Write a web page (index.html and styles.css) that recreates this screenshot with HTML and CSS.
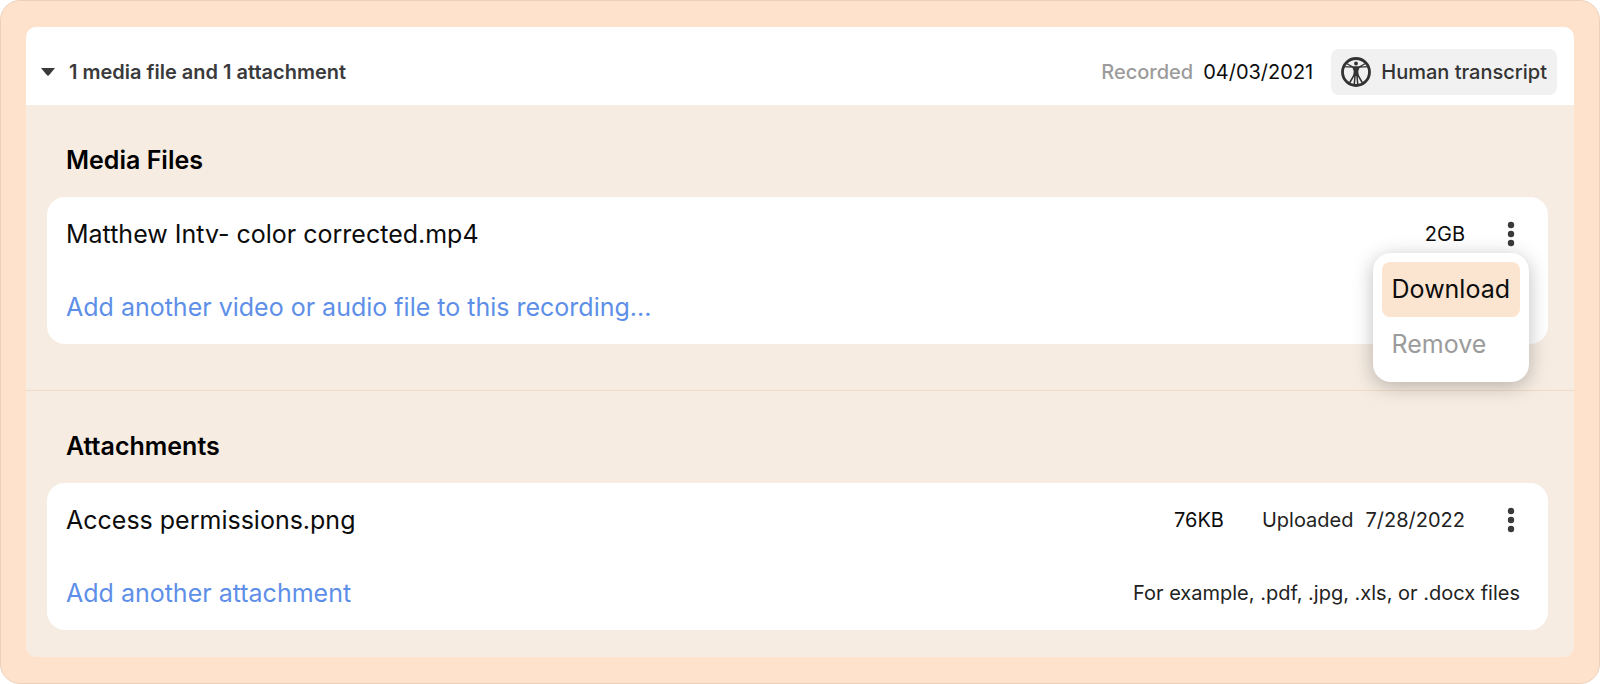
FILE: index.html
```html
<!DOCTYPE html>
<html lang="en">
<head>
<meta charset="utf-8">
<meta name="viewport" content="width=device-width, initial-scale=1">
<title>Recording files</title>
<link rel="stylesheet" href="styles.css">
</head>
<body>
<main class="frame">
  <div class="panel">
    <header class="summary">
      <button class="toggle" type="button" aria-expanded="true">
        <svg class="caret" viewBox="0 0 14 8" aria-hidden="true"><path d="M0 0h14L8 7.300Q7 8.200 6 7.300Z"/></svg>
        <span>1 media file and 1 attachment</span>
      </button>
      <div class="recorded"><span class="recorded-label">Recorded</span><time datetime="2021-04-03">04/03/2021</time></div>
      <button class="transcript" type="button">
        <svg class="human" viewBox="0 0 30 30" aria-hidden="true">
          <circle cx="15" cy="15" r="13.500" fill="none" stroke="currentColor" stroke-width="2.800"/>
          <circle cx="15" cy="6.500" r="1.900" fill="currentColor"/>
          <path d="M2.500 9.600L12 10.200h6l9.500-.6M5.500 6.500l7 3.800M24.500 6.500l-7 3.800" fill="none" stroke="currentColor" stroke-width="1.300"/>
          <path d="M13.700 17L8.500 26M16.300 17l5.200 9M14.200 17l-1 11M15.800 17l1 11" fill="none" stroke="currentColor" stroke-width="1.500"/>
          <path d="M11 9.500h8L17.300 14l.4 5h-5.400l.4-5Z" fill="currentColor"/>
        </svg>
        <span>Human transcript</span>
      </button>
    </header>

    <section class="group">
      <h2 class="group-title">Media Files</h2>
      <div class="card">
        <div class="row">
          <span class="file-name">Matthew Intv- color corrected.mp4</span>
          <span class="meta">2GB</span>
          <div class="actions">
            <button class="more" type="button" aria-label="File options" aria-expanded="true">
              <svg class="dots" viewBox="0 0 8 26" aria-hidden="true"><circle cx="4" cy="4" r="3.200"/><circle cx="4" cy="13" r="3.200"/><circle cx="4" cy="22" r="3.200"/></svg>
            </button>
            <div class="menu">
              <button class="menu-item active" type="button">Download</button>
              <button class="menu-item muted" type="button">Remove</button>
            </div>
          </div>
        </div>
        <div class="row">
          <a class="add" href="#">Add another video or audio file to this recording...</a>
        </div>
      </div>
    </section>

    <section class="group">
      <h2 class="group-title">Attachments</h2>
      <div class="card">
        <div class="row">
          <span class="file-name">Access permissions.png</span>
          <span class="meta">76KB</span>
          <span class="meta uploaded"><span>Uploaded</span><time datetime="2022-07-28">7/28/2022</time></span>
          <div class="actions">
            <button class="more" type="button" aria-label="Attachment options">
              <svg class="dots" viewBox="0 0 8 26" aria-hidden="true"><circle cx="4" cy="4" r="3.200"/><circle cx="4" cy="13" r="3.200"/><circle cx="4" cy="22" r="3.200"/></svg>
            </button>
          </div>
        </div>
        <div class="row">
          <a class="add" href="#">Add another attachment</a>
          <span class="hint">For example, .pdf, .jpg, .xls, or .docx files</span>
        </div>
      </div>
    </section>
  </div>
</main>
</body>
</html>
```
FILE: styles.css
```css
* {
  box-sizing: border-box;
}

body {
  margin: 0;
  background: #fff;
  color: #0c0c0c;
  font-family: Inter, "Liberation Sans", sans-serif;
  font-size: 20px;
  line-height: 28px;
}

button {
  border: 0;
  padding: 0;
  background: none;
  color: inherit;
  font: inherit;
  cursor: pointer;
}

.frame {
  padding: 26px 25px;
  border: 1px solid #ecd0ba;
  border-radius: 20px;
  background: #ffe2cb;
}

.panel {
  border-radius: 10px;
  background: #f6ece2;
}

.summary {
  display: flex;
  align-items: center;
  gap: 18px;
  padding: 22px 17px 10px 15px;
  border-radius: 10px 10px 0 0;
  background: #fff;
}

.toggle {
  display: flex;
  align-items: center;
  gap: 14px;
  margin-right: auto;
  color: #3a3a3c;
  font-weight: 600;
}

.caret {
  width: 14px;
  height: 8px;
  fill: currentColor;
}

.recorded {
  display: flex;
  gap: 10px;
}

.recorded-label {
  color: #9b9b9b;
  font-weight: 500;
}

.transcript {
  display: flex;
  align-items: center;
  gap: 10px;
  padding: 8px 10px;
  border-radius: 8px;
  background: #f1f1f1;
  color: #333;
  font-weight: 500;
}

.human {
  width: 30px;
  height: 30px;
}

.group {
  padding: 38px 26px 46px 21px;
}

.group + .group {
  padding-bottom: 27px;
  border-top: 1px solid #efdcc4;
}

.group-title {
  margin: 0 0 20px;
  padding-left: 19px;
  color: #000;
  font-size: 25px;
  line-height: 34px;
  font-weight: 600;
}

.card {
  padding-bottom: 1px;
  border-radius: 18px;
  background: #fff;
}

.row {
  display: flex;
  align-items: center;
  height: 73px;
  padding: 0 28px 0 19px;
}

.file-name,
.add {
  margin-right: auto;
  font-size: 25px;
}

.add {
  color: #5e8fe8;
  text-decoration: none;
}

.meta + .meta {
  margin-left: 38px;
}

.uploaded {
  display: flex;
  gap: 12px;
}

.uploaded,
.hint {
  color: #222;
}

.actions {
  position: relative;
  margin-left: 37px;
}

.more {
  display: flex;
  padding: 6px 5px;
}

.dots {
  width: 8px;
  height: 26px;
  fill: #3a3a3c;
}

.menu {
  position: absolute;
  top: 100%;
  right: -9px;
  z-index: 1;
  padding: 9px 9px 10px;
  border-radius: 18px;
  background: #fff;
  box-shadow: 0 4px 20px rgba(0, 0, 0, 0.26);
}

.menu-item {
  display: block;
  width: 100%;
  padding: 0 10px;
  border-radius: 8px;
  font-size: 25px;
  line-height: 55px;
  text-align: left;
}

.active {
  background: #fbe5d1;
}

.muted {
  color: #9b9b9b;
}
```
